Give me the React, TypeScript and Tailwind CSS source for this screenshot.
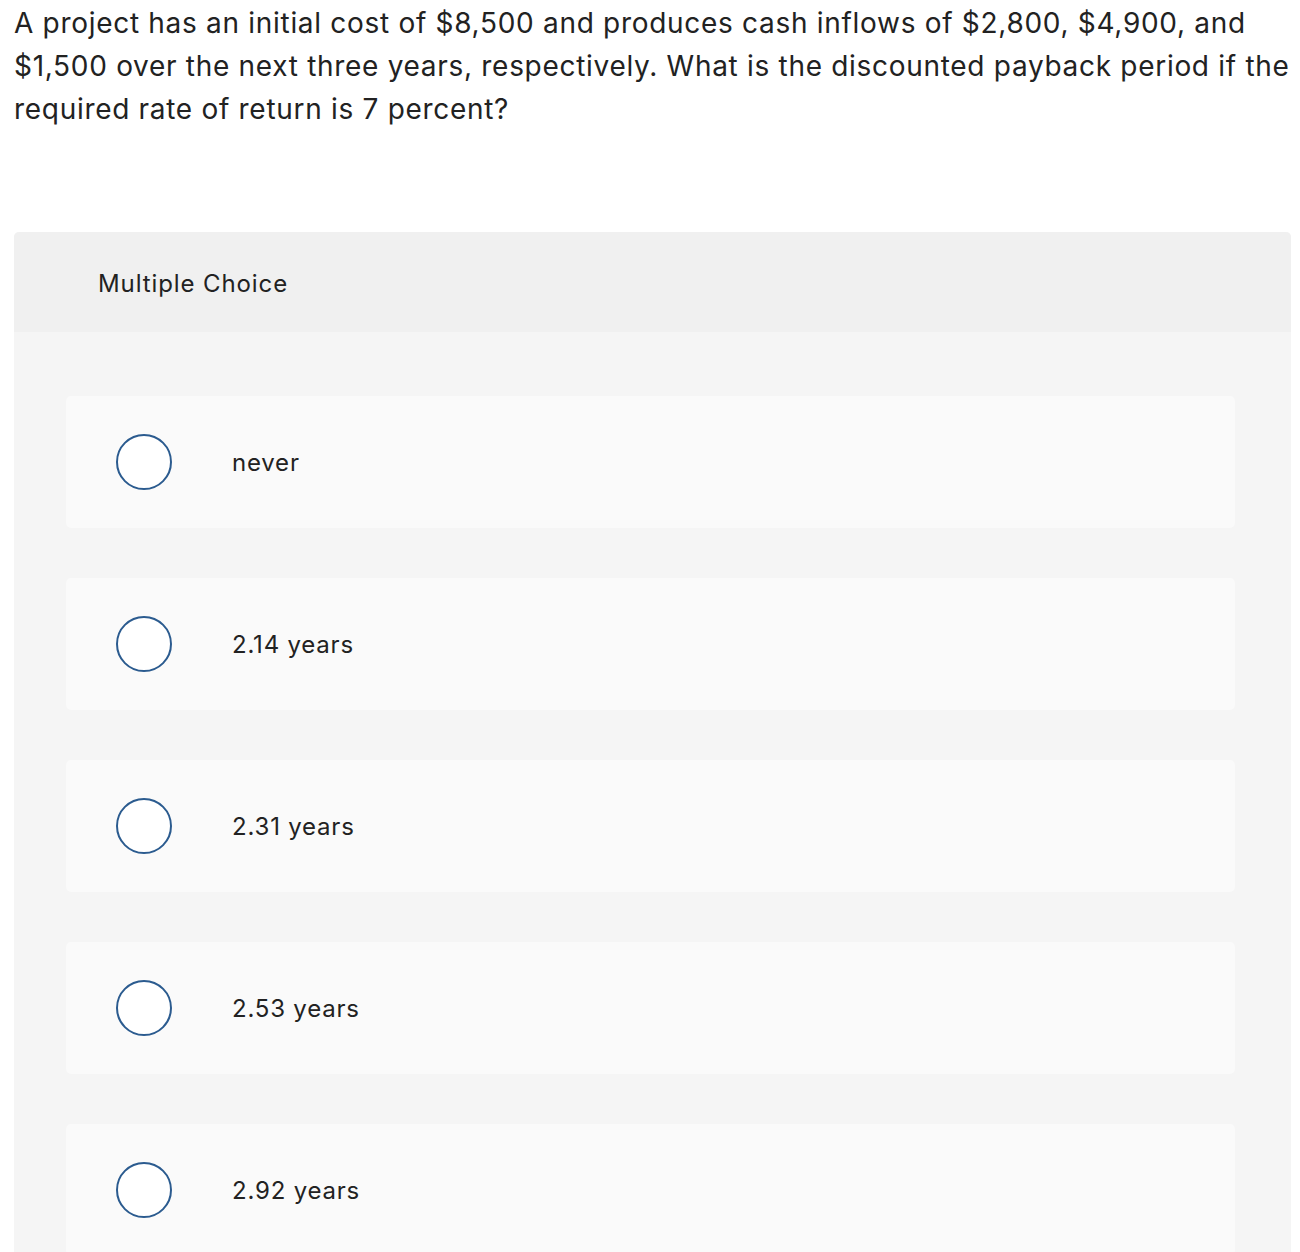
const options = ['never', '2.14 years', '2.31 years', '2.53 years', '2.92 years']

function Option({ label }: { label: string }) {
  return (
    <div className="flex h-[132px] items-center rounded-[5px] bg-[#fafafa]">
      <div className="ml-[50px] h-[56px] w-[56px] shrink-0 rounded-full border-2 border-[#2b5b8f] bg-white"></div>
      <span className="ml-[60px] pt-[2px] text-[24px] tracking-[0.8px] text-[#222]">{label}</span>
    </div>
  )
}

export default function App() {
  return (
    <div className="min-h-screen bg-white font-[Inter,'Liberation_Sans',sans-serif] text-[#222]">
      <p className="pl-[14px] pt-[2px] text-[28px] leading-[43px] tracking-[0.7px]">
        A project has an initial cost of $8,500 and produces cash inflows of $2,800, $4,900, and $1,500 over the next three
        years, respectively. What is the discounted payback period if the required rate of return is 7 percent?
      </p>

      <div className="ml-[14px] mt-[101px] w-[1277px] overflow-hidden rounded-[5px] bg-[#f5f5f5]">
        <div className="flex h-[100px] items-center bg-[#f0f0f0] pl-[84px] pt-[4px]">
          <span className="text-[24px] tracking-[0.9px]">Multiple Choice</span>
        </div>
        <div className="flex flex-col gap-[50px] pb-[50px] pl-[52px] pr-[56px] pt-[64px]">
          {options.map((o) => (
            <Option key={o} label={o} />
          ))}
        </div>
      </div>
    </div>
  )
}
